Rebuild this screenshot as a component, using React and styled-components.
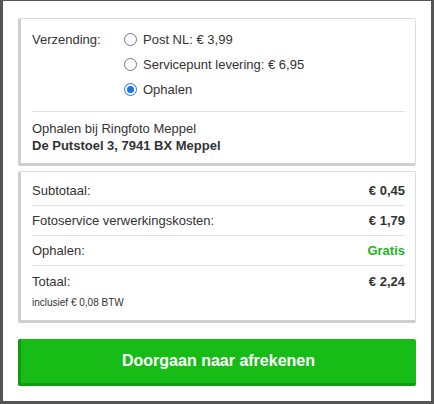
import React from "react";
import styled, { createGlobalStyle } from "styled-components";

const Global = createGlobalStyle`
  html, body { margin: 0; padding: 0; background: #fff; }
  body { font-family: "Liberation Sans", Arial, sans-serif; color: #333; }
  * { box-sizing: border-box; }
`;

const Frame = styled.div`
  width: 434px;
  height: 404px;
  border: 3px solid #555;
  border-top-width: 1px;
  background: #fff;
  padding: 17px 15px 15px 15px;
  display: flex;
  flex-direction: column;
`;

const Card = styled.div`
  background: #fff;
  border: 1px solid #dcdce4;
  border-left: 3px solid #cfcfcf;
  border-bottom: 3px solid #cfcfcf;
  border-radius: 2px;
  padding: ${(p) => p.$pad};
  margin-bottom: ${(p) => p.$mb || 0}px;
`;

const ShipRow = styled.div`
  display: flex;
  align-items: flex-start;
`;

const ShipLabel = styled.div`
  width: 92px;
  font-size: 13px;
  line-height: 25px;
`;

const Options = styled.div`
  display: flex;
  flex-direction: column;
`;

const Option = styled.label`
  display: flex;
  align-items: center;
  height: 25px;
  font-size: 13px;
  gap: 6px;
`;

const RadioCircle = styled.span`
  width: 13px;
  height: 13px;
  border-radius: 50%;
  border: 1px solid ${(p) => (p.$on ? "#1a73e8" : "#767676")};
  background: #fff;
  display: flex;
  align-items: center;
  justify-content: center;
  &::after {
    content: "";
    display: ${(p) => (p.$on ? "block" : "none")};
    width: 7px;
    height: 7px;
    border-radius: 50%;
    background: #1a73e8;
  }
`;

const Divider = styled.div`
  height: 1px;
  background: #e2e2e2;
  margin: ${(p) => p.$m};
`;

const Line = styled.div`
  font-size: 13px;
  line-height: 17px;
  font-weight: ${(p) => (p.$bold ? 700 : 400)};
`;

const Row = styled.div`
  display: flex;
  justify-content: space-between;
  align-items: center;
  height: 30px;
  font-size: 13px;
  border-bottom: ${(p) => (p.$last ? "none" : "1px solid #e2e2e2")};
`;

const Value = styled.span`
  font-weight: 700;
  color: ${(p) => p.$color || "#333"};
`;

const Small = styled.div`
  font-size: 10px;
  line-height: 12px;
  margin-top: 1px;
`;

const Button = styled.button`
  margin-top: 16px;
  height: 47px;
  width: 100%;
  border: none;
  border-left: 3px solid #0f9a11;
  border-bottom: 3px solid #0f9a11;
  border-radius: 2px;
  background: #17bc17;
  color: #fff;
  font-family: "Liberation Sans", Arial, sans-serif;
  font-weight: 700;
  font-size: 16px;
  padding: 0;
  cursor: pointer;
`;

export default function App() {
  return (
    <>
      <Global />
      <Frame>
        <Card $pad="8px 10px 9px 11px" $mb={5}>
          <ShipRow>
            <ShipLabel>Verzending:</ShipLabel>
            <Options>
              <Option><RadioCircle />Post NL: € 3,99</Option>
              <Option><RadioCircle />Servicepunt levering: € 6,95</Option>
              <Option><RadioCircle $on />Ophalen</Option>
            </Options>
          </ShipRow>
          <Divider $m="9px 0 8px 0" />
          <Line>Ophalen bij Ringfoto Meppel</Line>
          <Line $bold>De Putstoel 3, 7941 BX Meppel</Line>
        </Card>
        <Card $pad="4px 10px 11px 11px">
          <Row><span>Subtotaal:</span><Value>€ 0,45</Value></Row>
          <Row><span>Fotoservice verwerkingskosten:</span><Value>€ 1,79</Value></Row>
          <Row><span>Ophalen:</span><Value $color="#1fb41f">Gratis</Value></Row>
          <Row $last><span>Totaal:</span><Value>€ 2,24</Value></Row>
          <Small>inclusief € 0,08 BTW</Small>
        </Card>
        <Button>Doorgaan naar afrekenen</Button>
      </Frame>
    </>
  );
}
